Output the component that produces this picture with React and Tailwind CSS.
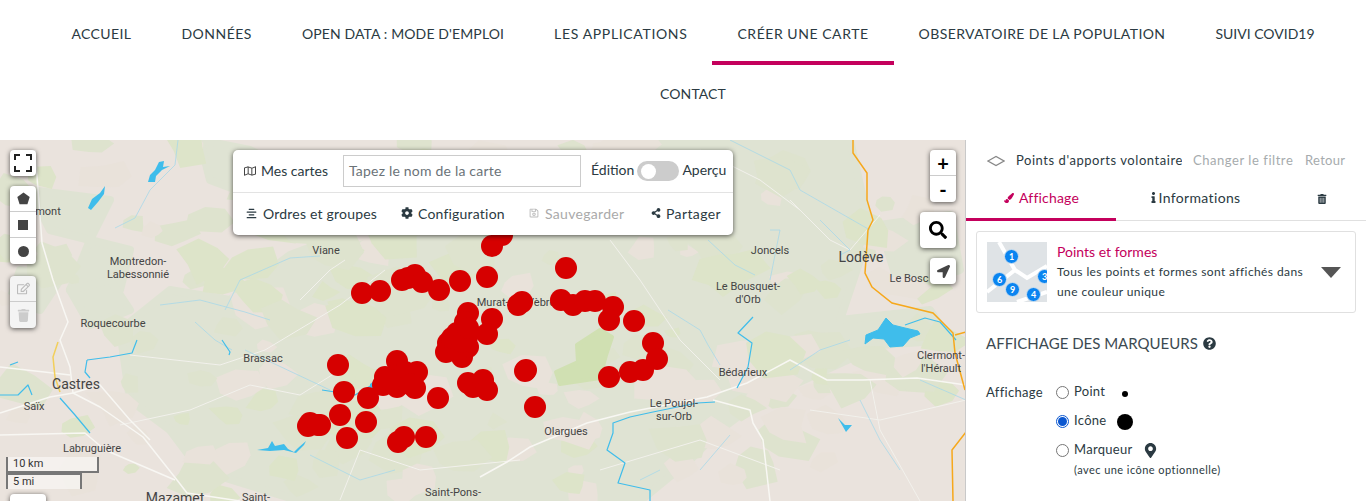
import {
  FaRegMap, FaAlignCenter, FaCog, FaRegSave, FaShareAlt, FaSearch, FaLocationArrow, FaRegEdit,
  FaTrash, FaTrashAlt, FaPaintBrush, FaInfo, FaQuestionCircle, FaMapMarkerAlt,
} from "react-icons/fa";

const navRow = [
  ["ACCUEIL", "tracking-[0.4px]"],
  ["DONNÉES", "tracking-[0.5px]"],
  ["OPEN DATA : MODE D'EMPLOI", "tracking-[0.12px]"],
  ["LES APPLICATIONS", "tracking-[0.65px]"],
  ["CRÉER UNE CARTE", "tracking-[0.55px]"],
  ["OBSERVATOIRE DE LA POPULATION", "tracking-[0.4px]"],
  ["SUIVI COVID19", "tracking-[0px]"],
  ["CONTACT", "tracking-[0.1px]"],
];

const dots = [
  [362,293],[380,291],[402,280],[408,278],[415,275],[422,282],[439,290],[460,281],[338,365],[397,361],[417,372],[385,377],[397,387],[415,388],[383,385],[403,380],[395,375],[405,372],[390,380],[410,384],[344,392],[368,398],[438,398],[340,415],[366,422],[310,423],[308,426],[318,425],[320,425],[347,438],[398,442],[404,437],[426,437],
  [468,313],[465,322],[457,333],[448,343],[446,352],[462,357],[468,347],[467,337],[455,345],[458,350],[452,338],[462,342],[468,328],[468,383],[473,387],
  [492,246],[502,235],[487,277],[566,268],[522,302],[518,305],[561,300],[573,305],[585,301],[595,301],[613,307],[609,320],[634,321],[653,343],[657,359],[643,370],[630,372],[609,377],[526,370],[525,371],[535,407],[492,319],[487,334],[483,380],[487,390],
];

const labels = [
  ["mont", 48, 212, ""], ["Montredon-", 138, 262, ""], ["Labessonnié", 138, 275, ""], ["Roquecourbe", 113, 324, ""],
  ["Brassac", 263, 359, ""], ["Castres", 76, 384, "big"], ["Saïx", 34, 407, ""], ["Labruguière", 92, 449, ""],
  ["Mazamet", 175, 498, "big"], ["Saint-", 256, 498, ""], ["Saint-Pons-", 453, 493, ""], ["Viane", 326, 251, ""],
  ["Murat-sur-Vèbre", 516, 303, ""], ["Joncels", 770, 251, ""], ["Lodève", 861, 257, "big"], ["Le Bosc", 909, 279, ""],
  ["Le Bousquet-", 748, 287, ""], ["d'Orb", 748, 300, ""], ["Bédarieux", 743, 373, ""], ["Le Poujol-", 674, 404, ""],
  ["sur-Orb", 674, 417, ""], ["Olargues", 566, 432, ""], ["Clermont-", 941, 356, ""], ["l'Hérault", 941, 369, ""],
];

const greens = [
  "M120 330L170 290L230 300L290 255L330 240L400 235L500 235L560 212L620 200L640 140L850 140L870 230L840 320L930 310L950 340L880 345L760 400L720 430L690 460L640 501L300 501L200 470L170 430L130 400Z",
  "M200 140L250 150L300 175L250 195L210 180Z", "M90 240L130 250L120 290L70 290Z", "M30 190L110 200L90 240L50 230Z",
  "M70 290L110 280L130 310L90 325Z", "M880 225L950 215L960 270L900 290Z", "M20 270L60 280L40 310L10 300Z",
];
const roads = [
  "M480 477L507 462L530 447L587 423L630 412L707 397L747 383L790 360L827 380L863 380L917 378L966 385",
  "M713 400L750 410L753 423L763 440L770 501",
  "M35 150L42 243L53 280L68 322L60 340L70 367L73 393L100 407L143 437L177 480L187 493L240 501",
  "M0 367L53 373L70 375", "M0 413L50 397L73 393", "M0 435L85 433L105 450L175 480",
  "M73 393L100 385L130 420L150 440",
];
const thinRoads = [
  "M130 355L220 365L265 350L340 305L385 270", "M120 425L190 410L250 385L300 395L340 370", "M300 300L330 270L345 260",
  "M610 240L640 280L680 340L720 380", "M790 200L830 240L850 250L880 215", "M700 150L760 180L800 210", "M810 410L880 420L966 400",
  "M600 470L700 440L780 470", "M870 380L880 430L920 501", "M340 500L360 450L420 470L520 460",
];
const streams = [
  "M115 228L135 218L150 190L175 165L178 140", "M160 305L200 300L245 312L270 320", "M195 322L215 340L232 350", "M245 350L330 390",
  "M225 310L240 280L290 258L320 256", "M730 140L790 170L800 190L870 230", "M820 220L850 250L840 255", "M770 280L780 230L770 230",
  "M708 240L735 265L755 275", "M668 310L700 330L708 345L720 365", "M920 380L966 400", "M860 400L880 440L900 470", "M850 340L820 350L790 370", "M310 455L360 480L395 470",
  "M640 480L660 470", "M730 435L700 470",
];
const rivers = [
  "M87 360L110 357L132 353L137 340", "M87 360L85 372L90 378", "M0 395L18 395L28 385L32 395", "M60 398L75 415L90 433",
  "M222 340L230 352L229 355", "M753 317L738 333L752 343L748 367L737 388", "M715 402L697 403L653 412L630 417L613 423L613 433L607 450L625 463L618 483L650 490L650 501",
  "M322 390L355 395L372 385", "M905 325L925 318L940 322L956 340", "M10 365L18 362",
];

// mottled land cover: small irregular patches scattered with a fixed seed
function buildPatches() {
  let s = 1234;
  const rnd = () => {
    s = (s * 16807) % 2147483647;
    return s / 2147483647;
  };
  const out = [];
  for (let i = 0; i < 190; i++) {
    const x = rnd() * 966;
    const y = 140 + rnd() * 361;
    const r = 6 + rnd() * 18;
    const c = rnd();
    if (x > 790 && y > 395 && c > 0.2) continue;
    const pts = [];
    for (let k = 0; k < 7; k++) {
      const a = (k / 7) * Math.PI * 2;
      const d = r * (0.55 + rnd() * 0.75);
      pts.push(`${(x + Math.cos(a) * d * 1.4).toFixed(1)},${(y + Math.sin(a) * d).toFixed(1)}`);
    }
    out.push({ pts: pts.join(" "), fill: c < 0.3 ? "#e9e2da" : c < 0.7 ? "#dee3ce" : "#dde4c9" });
  }
  return out;
}
const patches = buildPatches();

function MapBase() {
  return (
    <svg viewBox="0 140 966 361" className="absolute inset-0 w-[966px] h-[361px]">
      {greens.map((d, i) => <path key={i} d={d} fill="#dfe3d3" stroke="#dfe3d3" strokeWidth="8" strokeLinejoin="round" />)}
      {patches.map((p, i) => <polygon key={i} points={p.pts} fill={p.fill} />)}
      <path d="M577 345L600 330L612 337L606 355L600 378L560 384L556 372L578 362Z" fill="#d0e0b2" stroke="#d0e0b2" strokeWidth="4" strokeLinejoin="round" />
      {thinRoads.map((d, i) => <path key={i} d={d} fill="none" stroke="#f2f1ec" strokeWidth="1" />)}
      {roads.map((d, i) => <path key={i} d={d} fill="none" stroke="#f8f7f3" strokeWidth="1.5" strokeLinejoin="round" />)}
      {streams.map((d, i) => <path key={i} d={d} fill="none" stroke="#a8d8e8" strokeWidth="0.8" />)}
      {rivers.map((d, i) => <path key={i} d={d} fill="none" stroke="#3fbdeb" strokeWidth="1.2" strokeLinejoin="round" />)}
      <path d="M148 182L150 175L155 170L159 162L164 161L163 167L170 166L162 170L156 176L155 182Z" fill="#3fbdeb" />
      <path d="M88 208L92 199L100 193L105 186L104 194L98 202L91 210Z" fill="#3fbdeb" />
      <path d="M257 450L268 448L272 441L275 446L284 444L288 449L294 452L298 448L306 441L304 445L296 453L284 450L270 451Z" fill="#3fbdeb" />
      <path d="M865 344L866 335L878 330L886 318L893 325L905 328L918 331L920 334L910 338L903 346L890 347L884 339L873 338Z" fill="#3fbdeb" stroke="#3fbdeb" strokeWidth="1" />
      <path d="M372 385L376 382L380 388L372 390Z" fill="#3fbdeb" stroke="#3fbdeb" strokeWidth="4" />
      <path d="M838 418L845 425L852 425L846 432Z" fill="#3fbdeb" />
      <path d="M853 140L853 153L867 173L867 200L873 220L868 230L865 273L872 287L892 303L933 313L953 333L955 353L965 390" fill="none" stroke="#f6a81c" strokeWidth="1.5" />
      <path d="M966 432L952 450L953 501" fill="none" stroke="#f6a81c" strokeWidth="1.5" />
      <path d="M955 335L966 332" fill="none" stroke="#f6a81c" strokeWidth="1.5" />
      <path d="M58 342L53 357L55 377L60 392" fill="none" stroke="#f2cf5b" strokeWidth="1.5" />
    </svg>
  );
}

function CtrlBtn({ children, className = "" }) {
  return <div className={`w-[26px] h-[26px] flex items-center justify-center ${className}`}>{children}</div>;
}

function Toolbar() {
  return (
    <div className="absolute left-[233px] top-[10px] w-[500px] h-[85px] bg-white rounded-[5px] shadow-[0_1px_5px_rgba(0,0,0,0.65)] text-[14px] tracking-[0.2px] text-[#2b3a42]">
      <div className="h-[43px] border-b border-[#e3e3e3] flex items-center pl-[11px]">
        <FaRegMap className="text-[12px] text-[#444]" />
        <span className="ml-[5px] mb-[2px] w-[82px] tracking-normal">Mes cartes</span>
        <div className="w-[238px] h-[32px] border border-[#ccc] flex items-center px-[5px] pb-[2px] text-[#6b7378]">Tapez le nom de la carte</div>
        <span className="ml-[10px] mb-[3px] tracking-normal">Édition</span>
        <div className="ml-[3px] w-[42px] h-[20px] rounded-full bg-[#ccc] flex items-center pl-[4px]">
          <div className="w-[15px] h-[15px] rounded-full bg-white" />
        </div>
        <span className="ml-[3px] mb-[3px] tracking-normal">Aperçu</span>
      </div>
      <div className="h-[42px] pb-[2px] flex items-center pl-[13px] whitespace-nowrap">
        <FaAlignCenter className="text-[11px]" />
        <span className="ml-[6px] w-[113px]">Ordres et groupes</span>
        <FaCog className="ml-[25px] text-[12px]" />
        <span className="ml-[5px] w-[85px]">Configuration</span>
        <FaRegSave className="ml-[26px] text-[10px] text-[#bbb]" />
        <span className="ml-[6px] w-[79px] text-[#aaa] tracking-[0.3px]">Sauvegarder</span>
        <FaShareAlt className="ml-[27px] text-[10px]" />
        <span className="ml-[5px] tracking-[0.4px]">Partager</span>
      </div>
    </div>
  );
}

function MapControls() {
  const box = "absolute bg-white rounded-[4px] shadow-[0_1px_5px_rgba(0,0,0,0.65)]";
  return (
    <>
      <div className={`${box} left-[10px] top-[10px]`}>
        <CtrlBtn>
          <svg viewBox="0 0 18 18" className="w-[18px] h-[18px]" fill="none" stroke="#222" strokeWidth="2">
            <path d="M1 6V1H6M12 1H17V6M17 12V17H12M6 17H1V12" />
          </svg>
        </CtrlBtn>
      </div>
      <div className={`${box} left-[10px] top-[46px]`}>
        <CtrlBtn className="border-b border-[#ccc]">
          <svg viewBox="0 0 12 12" className="w-[13px] h-[13px]"><path d="M6 0.5L11.7 4.7L9.6 11.3H2.4L0.3 4.7Z" fill="#444" /></svg>
        </CtrlBtn>
        <CtrlBtn className="border-b border-[#ccc]"><div className="w-[10px] h-[10px] bg-[#444]" /></CtrlBtn>
        <CtrlBtn><div className="w-[11px] h-[11px] rounded-full bg-[#444]" /></CtrlBtn>
      </div>
      <div className={`${box} left-[10px] top-[136px] !bg-[#f4f4f4]`}>
        <CtrlBtn className="border-b border-[#ccc]"><FaRegEdit className="text-[13px] text-[#bbb]" /></CtrlBtn>
        <CtrlBtn><FaTrash className="text-[13px] text-[#ccc]" /></CtrlBtn>
      </div>
      <div className={`${box} left-[930px] top-[10px]`}>
        <CtrlBtn className="border-b border-[#ccc] text-[20px] font-bold text-black">+</CtrlBtn>
        <CtrlBtn className="text-[20px] font-bold text-black">-</CtrlBtn>
      </div>
      <div className={`${box} left-[920px] top-[72px] w-[36px] h-[36px] flex items-center justify-center`}>
        <FaSearch className="text-[18px] text-black" />
      </div>
      <div className={`${box} left-[930px] top-[118px]`}>
        <CtrlBtn><FaLocationArrow className="text-[13px] text-[#444]" /></CtrlBtn>
      </div>
      <div className="absolute left-[6px] top-[317px] w-[93px] h-[16px] border-2 border-t-0 border-[#777] bg-white/50 text-[11px] leading-[14px] pl-[5px] text-[#333] font-['Roboto',sans-serif]">10 km</div>
      <div className="absolute left-[6px] top-[333px] w-[76px] h-[16px] border-2 border-b-0 border-[#777] bg-white/50 text-[11px] leading-[14px] pl-[5px] text-[#333] font-['Roboto',sans-serif]">5 mi</div>
      <div className={`${box} left-[10px] top-[354px] w-[36px] h-[30px]`} />
    </>
  );
}

function Thumb() {
  const pins = [["1", 24, 14], ["6", 12, 37], ["9", 25, 47], ["4", 46, 52], ["3", 57, 34]];
  return (
    <div className="relative w-[60px] h-[60px] bg-[#dfe3e6] overflow-hidden shrink-0">
      <svg viewBox="0 0 60 60" className="absolute inset-0 w-full h-full">
        <path d="M12 0L28 28L40 36L60 24M0 50L28 28M30 60L60 50" fill="none" stroke="#fff" strokeWidth="4" />
      </svg>
      {pins.map(([n, x, y]) => (
        <div key={n} style={{ left: x - 7, top: y - 7 }} className="absolute w-[15px] h-[15px] rounded-full bg-[#0a84f0] border border-[#cfe0ee] text-white text-[9px] font-bold leading-[14px] text-center">{n}</div>
      ))}
    </div>
  );
}

function Radio({ checked }) {
  return checked ? (
    <span className="w-[13px] h-[13px] rounded-full border border-[#0b57d0] flex items-center justify-center shrink-0">
      <span className="w-[9px] h-[9px] rounded-full bg-[#0b57d0]" />
    </span>
  ) : (
    <span className="w-[13px] h-[13px] rounded-full border border-[#767676] bg-white shrink-0" />
  );
}

function SidePanel() {
  return (
    <div className="w-[400px] h-[361px] bg-white shrink-0 shadow-[-1px_0_0_#c9c9c9] z-10 text-[#2b3a42]">
      <div className="h-[38px] flex items-center pl-[21px] pt-[3px] text-[13px]">
        <svg viewBox="0 0 18 12" className="w-[18px] h-[12px]" fill="none" stroke="#888" strokeWidth="1.2"><path d="M1 6L9 1.5L17 6L9 10.5Z" /></svg>
        <span className="ml-[11px] w-[166px] overflow-hidden whitespace-nowrap tracking-[0.55px]">Points d'apports volontaire</span>
        <span className="ml-[11px] w-[100px] text-[#a6abad] whitespace-nowrap tracking-[0.55px]">Changer le filtre</span>
        <span className="ml-[12px] text-[#a6abad] tracking-[0.3px]">Retour</span>
      </div>
      <div className="h-[43px] border-b border-[#e0e0e0] flex text-[14px] tracking-[0.2px]">
        <div className="w-[150px] h-[43px] pb-[1px] border-b-[3px] border-[#c4005c] text-[#c4005c] flex items-center justify-center gap-[5px] pl-[1px]">
          <FaPaintBrush className="text-[10px]" />Affichage
        </div>
        <div className="w-[150px] flex items-center justify-center pl-[6px] pb-[3px] tracking-[0.35px]">
          <FaInfo className="text-[11px]" />Informations
        </div>
        <div className="w-[100px] flex items-center justify-center pb-[1px] pl-[12px]"><FaTrashAlt className="text-[10px]" /></div>
      </div>
      <div className="mt-[10px] mx-[10px] h-[82px] border border-[#e0e0e0] rounded-[3px] flex items-center pl-[10px]">
        <Thumb />
        <div className="ml-[10px] w-[250px]">
          <div className="text-[14px] leading-[20px] text-[#c4005c]">Points et formes</div>
          <div className="text-[12px] leading-[20px] whitespace-nowrap tracking-[0.4px]">Tous les points et formes sont affichés dans<br />une couleur unique</div>
        </div>
        <div className="ml-[14px] w-0 h-0 border-x-[10px] border-x-transparent border-t-[11px] border-t-[#555]" />
      </div>
      <div className="mt-[20px] ml-[20px] flex items-center gap-[5px] text-[15px] leading-[20px] text-[#3c4a52]">
        AFFICHAGE DES MARQUEURS <FaQuestionCircle className="text-[13px] text-[#2b3a42]" />
      </div>
      <div className="mt-[29px] ml-[20px] flex text-[13px] tracking-[0.3px]">
        <div className="w-[70px] leading-[20px]">Affichage</div>
        <div>
          <div className="h-[20px] flex items-center gap-[5px]">
            <Radio /><span>Point</span><span className="ml-[12px] mt-[3px] w-[6px] h-[6px] rounded-full bg-black" />
          </div>
          <div className="mt-[9px] h-[20px] flex items-center gap-[5px]">
            <Radio checked /><span>Icône</span><span className="ml-[5px] mt-[1px] w-[16px] h-[16px] rounded-full bg-black" />
          </div>
          <div className="mt-[9px] h-[20px] flex items-center gap-[5px]">
            <Radio /><span>Marqueur</span><FaMapMarkerAlt className="ml-[5px] text-[15px] text-[#2b3a42]" />
          </div>
          <div className="ml-[18px] text-[11px] leading-[20px] tracking-[0.45px] whitespace-nowrap">(avec une icône optionnelle)</div>
        </div>
      </div>
    </div>
  );
}

export default function App() {
  return (
    <div className="w-[1366px] h-[501px] overflow-hidden bg-white font-['Lato','Noto_Sans',sans-serif]">
      <nav className="h-[140px] pt-[5px] pl-[20px] flex flex-wrap justify-center content-start text-[14px] text-[#2b3a42]">
        {navRow.map(([item, spacing]) => (
          <a key={item} className={`h-[60px] px-[25px] flex items-center whitespace-nowrap border-b-4 ${spacing} ${item === "CRÉER UNE CARTE" ? "border-[#c4005c]" : "border-transparent"}`}>{item}</a>
        ))}
      </nav>
      <div className="flex h-[361px]">
        <div className="relative w-[966px] h-[361px] bg-[#eae3dd] overflow-hidden shrink-0">
          <MapBase />
          {labels.map(([t, x, y, size]) => (
            <span key={t} style={{ left: x, top: y - 140 }} className={`absolute -translate-x-1/2 -translate-y-1/2 whitespace-nowrap font-['Roboto',sans-serif] text-[#444] ${size === "big" ? "text-[14px]" : "text-[11px]"}`}>{t}</span>
          ))}
          <svg viewBox="0 140 966 361" className="absolute inset-0 w-[966px] h-[361px]">
            {dots.map(([x, y], i) => <circle key={i} cx={x} cy={y} r="11" fill="#d60000" />)}
          </svg>
          <Toolbar />
          <MapControls />
        </div>
        <SidePanel />
      </div>
    </div>
  );
}
